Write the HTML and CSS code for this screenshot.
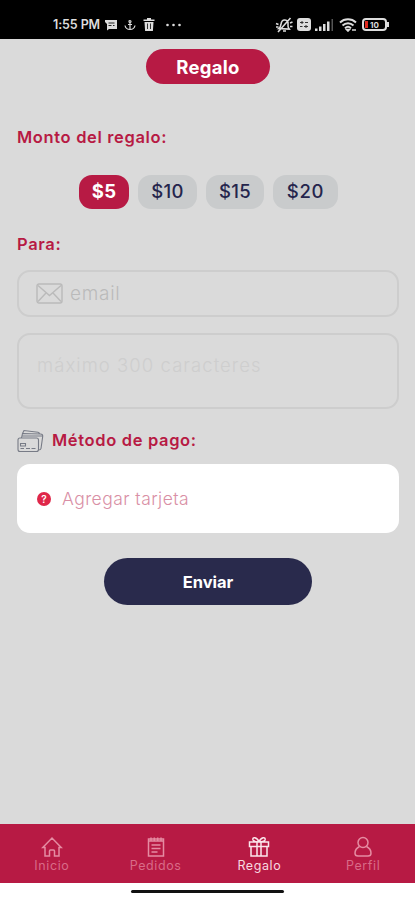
FILE: index.html
```html
<!DOCTYPE html>
<html lang="es">
<head>
  <meta charset="UTF-8">
  <meta name="viewport" content="width=device-width, initial-scale=1">
  <title>Regalo</title>
  <link rel="stylesheet" href="styles.css">
</head>
<body>
  <div class="app">
    <div class="status-bar">
      <div class="status-left">
        <span class="time">1:55 PM</span>
        <svg class="ic-msg" width="12" height="12" viewBox="0 0 12 12"><path d="M0 1h12v9H4l-2 1.500V5L0 3z" fill="#ddd"/><path d="M3.500 4h6M3.500 6.500h3M8 6.500h1.500" stroke="#222" stroke-width="1"/></svg>
        <svg class="ic-anchor" width="12" height="12" viewBox="0 0 12 12" fill="none" stroke="#ddd" stroke-width="1.200"><circle cx="6" cy="2.500" r="1"/><path d="M6 3.500v7M4 5.500h4M1 6.500c.5 2.500 2.500 4 5 4s4.500-1.500 5-4"/></svg>
        <svg class="ic-trash" width="12" height="13" viewBox="0 0 12 13"><path d="M4 0h4v1.500h3.500V3H.5V1.500H4zM1.500 4h9l-.6 9H2.100z" fill="#ddd"/><path d="M4.500 5.500v5.500M7.500 5.500v5.500" stroke="#333"/></svg>
        <svg class="ic-dots" width="15" height="4" viewBox="0 0 15 4" fill="#ddd"><circle cx="1.500" cy="2" r="1.300"/><circle cx="7.500" cy="2" r="1.300"/><circle cx="13.500" cy="2" r="1.300"/></svg>
      </div>
      <div class="status-right">
        <svg width="18" height="16" viewBox="0 0 18 16" fill="none" stroke="#ddd" stroke-width="1.600"><path d="M4 11.500c1.500-1 1.500-2.500 2-4.500C6.500 4 8 2.800 10 3s3.500 1.500 3 4.500c-.3 2 0 3 1.200 4.500zM8 14h3M3 15L15.500 1M1 6.500l2.500 1M1 10h2.500M15 6l2.500-1M15 9.500h2.500"/></svg>
        <svg width="14" height="13" viewBox="0 0 14 13"><rect width="14" height="13" rx="3" fill="#ddd"/><path d="M3 4.500h3.500M8 4.500h3M3 8.500h2.500M7 8.500h4M5 3v3M9 7v3" stroke="#333"/></svg>
        <svg class="ic-signal" width="19" height="12" viewBox="0 0 19 12" fill="#ddd"><path d="M0 9.500h2.500V12H0zM4 7.500h2.500V12H4zM8 5h2.500v7H8zM12 2.500h2.500V12H12z"/><path d="M16.500 0H18v12h-1.500z" fill="#555"/></svg>
        <svg class="ic-wifi" width="18" height="14" viewBox="0 0 18 14" fill="none" stroke="#ddd" stroke-width="1.900"><path d="M1 4.500C5.500.2 12.500.2 17 4.500M3.500 7.500c3.200-3 7.800-3 11 0M6 10.200c1.800-1.700 4.200-1.700 6 0"/><path d="M8 11.800l1 1 1-1z" fill="#ddd"/><path d="M13 12h4" stroke="#aaa"/></svg>
        <div class="battery"><span class="battery-low"></span><span class="battery-text">10</span></div>
      </div>
    </div>

    <main class="content">
      <h1 class="page-title">Regalo</h1>

      <h2 class="label">Monto del regalo:</h2>
      <div class="amounts">
        <button class="amount active">$5</button>
        <button class="amount">$10</button>
        <button class="amount">$15</button>
        <button class="amount">$20</button>
      </div>

      <h2 class="label label-para">Para:</h2>
      <div class="field">
        <svg width="27" height="21" viewBox="0 0 27 21" fill="none" stroke="#bababa" stroke-width="1.400"><rect x="1" y="1" width="25" height="19" rx="2"/><path d="M2 2.500l11.500 10L25 2.500M2 18.500l8-8.500M25 18.500L17 10"/></svg>
        <span class="field-text">email</span>
      </div>
      <div class="message"><span class="message-text">máximo 300 caracteres</span></div>

      <div class="pay-head">
        <svg width="27" height="24" viewBox="0 0 27 24" fill="none" stroke="#777b86" stroke-width="1.100"><rect x="1" y="9" width="20.500" height="13.500" rx="2"/><path d="M4.500 9l1-4.500 18 .5q2.500.2 2.200 2.500L24 19.500q-.3 1.500-2.500 1.500M5.500 4.500L7 1.500l14 1.700q1.500.3 1.500 1.800M5 7h20.500"/><path d="M3.500 14.500h5v2.500h-5zM3.500 19.500H7M9 19.500h4M14.500 19.500h4"/></svg>
        <h2 class="label pay-label">Método de pago:</h2>
      </div>
      <div class="card">
        <span class="help">?</span>
        <span class="card-text">Agregar tarjeta</span>
      </div>

      <button class="send">Enviar</button>
    </main>

    <nav class="tabs">
      <a class="tab">
        <svg width="22" height="22" viewBox="0 0 22 22"><path d="M4 11.500H1.800L11 2l9.200 9.500H18V20h-4.500v-5q0-1-1-1h-3q-1 0-1 1v5H4z"/></svg>
        <span>Inicio</span>
      </a>
      <a class="tab">
        <svg width="22" height="22" viewBox="0 0 22 22"><path d="M3.500 3h15v17h-15zM3.500 5h15M6 1.500v3M9.300 1.500v3M12.700 1.500v3M16 1.500v3M6.500 9h9M6.500 12.500h9M6.500 16h6"/></svg>
        <span>Pedidos</span>
      </a>
      <a class="tab active">
        <svg width="22" height="22" viewBox="0 0 22 22"><path d="M1.500 6h19v4.500h-19zM3 10.500h16V20H3zM9 6v14M13 6v14M11 6C9 1 4 .5 5 4q.5 1.500 6 2M11 6c2-5 7-5.500 6-2q-.5 1.500-6 2"/></svg>
        <span>Regalo</span>
      </a>
      <a class="tab">
        <svg width="22" height="22" viewBox="0 0 22 22"><circle cx="11" cy="6.500" r="5"/><path d="M7.500 10.500C4.500 12 3 14.500 3 17.200Q3 20 6 20h10q3 0 3-2.800c0-2.700-1.500-5.200-4.500-6.700"/></svg>
        <span>Perfil</span>
      </a>
    </nav>
    <div class="home-area"><div class="home-bar"></div></div>
  </div>
</body>
</html>
```
FILE: styles.css
```css
* {
  margin: 0;
  padding: 0;
  box-sizing: border-box;
}
body {
  font-family: 'Inter', sans-serif;
  background-color: #dadada;
}
button {
  font-family: inherit;
  border: none;
  cursor: pointer;
}
svg {
  flex-shrink: 0;
}
.app {
  width: 415px;
  height: 900px;
  display: flex;
  flex-direction: column;
  overflow: hidden;
}

/* status bar */
.status-bar {
  height: 39px;
  background-color: #000;
  color: #ddd;
  display: flex;
  justify-content: space-between;
  padding: 10px 26px 0 53px;
}
.status-left, .status-right {
  display: flex;
  align-items: center;
}
.time {
  width: 48px;
  font-size: 12.5px;
  font-weight: 600;
  letter-spacing: -0.1px;
  white-space: nowrap;
}
.ic-msg {
  margin-left: 4px;
}
.ic-anchor {
  margin-left: 7px;
}
.ic-trash {
  margin-left: 7px;
}
.ic-dots {
  margin-left: 11px;
}
.status-right {
  gap: 4px;
}
.ic-wifi {
  margin-left: 1px;
}
.battery {
  width: 25px;
  height: 13px;
  border: 2px solid #ddd;
  border-radius: 4px;
  display: flex;
  align-items: center;
  margin-left: 1px;
  margin-right: 2px;
  position: relative;
}
.battery::after {
  content: "";
  position: absolute;
  right: -4px;
  top: 2px;
  width: 2px;
  height: 5px;
  background-color: #ddd;
}
.battery-low {
  width: 3px;
  height: 7px;
  background-color: #e02b20;
  margin-left: 1px;
}
.battery-text {
  font-size: 8px;
  font-weight: 700;
  line-height: 8px;
  margin-left: 2px;
}

/* form */
.content {
  flex: 1;
  padding: 10px 16px 0 17px;
  display: flex;
  flex-direction: column;
}
.page-title {
  width: 124px;
  height: 35px;
  margin-left: 129px;
  border-radius: 18px;
  background-color: #b71a44;
  color: #fff;
  font-size: 18.5px;
  font-weight: 700;
  line-height: 36px;
  letter-spacing: 0.3px;
  text-align: center;
}
.label {
  color: #b71a44;
  font-size: 16.5px;
  font-weight: 600;
  line-height: 20px;
  letter-spacing: 0.65px;
  margin-top: 43px;
  white-space: nowrap;
}
.amounts {
  display: flex;
  gap: 9px;
  margin: 28px 0 0 62px;
}
.amount {
  width: 59px;
  height: 34px;
  padding-bottom: 3px;
  border-radius: 13px;
  background-color: #c9cbcc;
  color: #25254c;
  font-size: 18.5px;
  font-weight: 500;
  letter-spacing: 0.3px;
}
.amount.active {
  width: 50px;
  background-color: #b71a44;
  color: #fff;
  font-weight: 700;
}
.amount:nth-child(3) {
  width: 58px;
}
.amount:last-child {
  width: 65px;
  letter-spacing: 0.7px;
}
.label-para {
  margin-top: 25px;
}
.field {
  height: 47px;
  margin-top: 16px;
  border: 2px solid #cdcdcd;
  border-radius: 13px;
  display: flex;
  align-items: center;
  gap: 7px;
  padding-left: 17px;
}
.field-text {
  color: #bababa;
  font-size: 19px;
  font-weight: 300;
  letter-spacing: 0.7px;
}
.message {
  height: 76px;
  margin-top: 16px;
  border: 2px solid #cdcdcd;
  border-radius: 13px;
  padding: 19px 0 0 18px;
}
.message-text {
  color: #cecece;
  font-size: 18.5px;
  font-weight: 300;
  letter-spacing: 1.05px;
}
.pay-head {
  height: 24px;
  margin-top: 20px;
  display: flex;
  align-items: center;
  gap: 8px;
}
.pay-label {
  margin-top: -2px;
}
.card {
  height: 69px;
  margin-top: 11px;
  border-radius: 13px;
  background-color: #fff;
  display: flex;
  align-items: center;
  gap: 11px;
  padding-left: 20px;
}
.help {
  width: 14px;
  height: 14px;
  border-radius: 50%;
  background-color: #df2749;
  color: #fff;
  font-size: 10px;
  font-weight: 600;
  line-height: 14px;
  text-align: center;
}
.card-text {
  color: #d98fa5;
  font-size: 17.5px;
  font-weight: 300;
  letter-spacing: 0.45px;
}
.send {
  width: 208px;
  height: 47px;
  margin: 25px 0 0 87px;
  border-radius: 24px;
  background-color: #292a4c;
  color: #fff;
  font-size: 16.5px;
  font-weight: 700;
}

/* bottom navigation */
.tabs {
  height: 59px;
  background-color: #b71a44;
  display: flex;
}
.tab {
  flex: 1;
  display: flex;
  flex-direction: column;
  align-items: center;
  padding-top: 12px;
  color: #d96b88;
  font-size: 12.5px;
  line-height: 15px;
  letter-spacing: 0.6px;
}
.tab svg {
  fill: none;
  stroke: #e58ca2;
  stroke-width: 1.5;
}
.tab.active {
  color: #f7d9e0;
}
.tab.active svg {
  stroke: #fbe6eb;
}
.home-area {
  height: 17px;
  background-color: #fff;
  padding-top: 7px;
}
.home-bar {
  width: 153px;
  height: 3px;
  margin-left: 131px;
  border-radius: 2px;
  background-color: #111;
}
```
